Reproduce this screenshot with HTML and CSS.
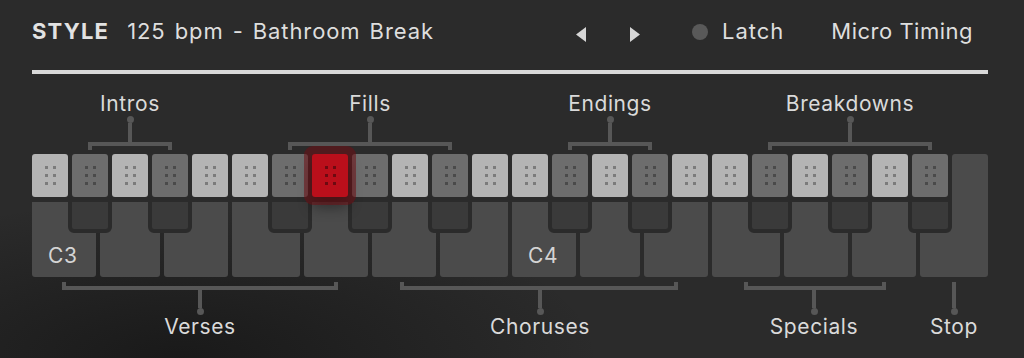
FILE: index.html
```html
<!DOCTYPE html>
<html lang="en">
<head>
    <meta charset="UTF-8">
    <meta name="viewport" content="width=device-width, initial-scale=1.0">
    <title>Style Keyboard</title>
    <link rel="stylesheet" href="styles.css">
</head>
<body>

    <div class="panel">
        <div class="header">
            <span class="title">STYLE</span>
            <span class="style-name">125 bpm - Bathroom Break</span>
            <div class="controls">
                <div class="arrow">
                    <svg width="10" height="15" viewBox="0 0 10 15"><polygon points="10,0 10,15 0,7.5"/></svg>
                </div>
                <div class="arrow next">
                    <svg width="10" height="15" viewBox="0 0 10 15"><polygon points="0,0 0,15 10,7.5"/></svg>
                </div>
                <div class="latch"><span class="latch-dot"></span>Latch</div>
                <div class="micro">Micro Timing</div>
            </div>
        </div>
        <div class="rule"></div>

        <!-- Groups above the keys -->
        <div class="top-groups">
            <div class="group intros">
                <span class="label">Intros</span>
                <span class="dot"></span>
                <span class="stem"></span>
                <span class="bar"></span>
            </div>
            <div class="group fills">
                <span class="label">Fills</span>
                <span class="dot"></span>
                <span class="stem"></span>
                <span class="bar"></span>
            </div>
            <div class="group endings">
                <span class="label">Endings</span>
                <span class="dot"></span>
                <span class="stem"></span>
                <span class="bar"></span>
            </div>
            <div class="group breakdowns">
                <span class="label">Breakdowns</span>
                <span class="dot"></span>
                <span class="stem"></span>
                <span class="bar"></span>
            </div>
        </div>

        <div class="keyboard">
            <div class="white-keys">
                <div class="white-key"><span class="note">C3</span></div>
                <div class="white-key"></div>
                <div class="white-key"></div>
                <div class="white-key"></div>
                <div class="white-key"></div>
                <div class="white-key"></div>
                <div class="white-key"></div>
                <div class="white-key"><span class="note">C4</span></div>
                <div class="white-key"></div>
                <div class="white-key"></div>
                <div class="white-key"></div>
                <div class="white-key"></div>
                <div class="white-key"></div>
                <div class="white-key"></div>
            </div>

            <div class="columns">
                <div class="col"><div class="pad light"></div></div>
                <div class="col"><div class="pad dark"></div><div class="black-key"></div></div>
                <div class="col"><div class="pad light"></div></div>
                <div class="col"><div class="pad dark"></div><div class="black-key"></div></div>
                <div class="col"><div class="pad light"></div></div>
                <div class="col"><div class="pad light"></div></div>
                <div class="col"><div class="pad dark"></div><div class="black-key"></div></div>
                <div class="col"><div class="pad active"></div></div>
                <div class="col"><div class="pad dark"></div><div class="black-key"></div></div>
                <div class="col"><div class="pad light"></div></div>
                <div class="col"><div class="pad dark"></div><div class="black-key"></div></div>
                <div class="col"><div class="pad light"></div></div>
                <div class="col"><div class="pad light"></div></div>
                <div class="col"><div class="pad dark"></div><div class="black-key"></div></div>
                <div class="col"><div class="pad light"></div></div>
                <div class="col"><div class="pad dark"></div><div class="black-key"></div></div>
                <div class="col"><div class="pad light"></div></div>
                <div class="col"><div class="pad light"></div></div>
                <div class="col"><div class="pad dark"></div><div class="black-key"></div></div>
                <div class="col"><div class="pad light"></div></div>
                <div class="col"><div class="pad dark"></div><div class="black-key"></div></div>
                <div class="col"><div class="pad light"></div></div>
                <div class="col"><div class="pad dark"></div><div class="black-key"></div></div>
                <div class="col"><div class="stop-top"></div></div>
            </div>
        </div>

        <!-- Groups below the keys -->
        <div class="bottom-groups">
            <div class="group verses">
                <span class="bar"></span>
                <span class="stem"></span>
                <span class="dot"></span>
                <span class="label">Verses</span>
            </div>
            <div class="group choruses">
                <span class="bar"></span>
                <span class="stem"></span>
                <span class="dot"></span>
                <span class="label">Choruses</span>
            </div>
            <div class="group specials">
                <span class="bar"></span>
                <span class="stem"></span>
                <span class="dot"></span>
                <span class="label">Specials</span>
            </div>
            <div class="group stop">
                <span class="stem"></span>
                <span class="dot"></span>
                <span class="label">Stop</span>
            </div>
        </div>
    </div>

</body>
</html>
```

FILE: styles.css
```css
body {
    margin: 0;
    height: 358px;
    overflow: hidden;
    font-family: Inter, "Open Sans", sans-serif;
    color: #dedede;
    background:
        radial-gradient(ellipse 420px 160px at 180px 358px, rgba(18, 18, 18, 0.7), transparent),
        #2b2b2b;
}

.panel {
    width: 956px;
    padding-left: 32px;
}

.header {
    display: flex;
    align-items: center;
    height: 30px;
    padding-top: 16px;
    line-height: 30px;
}

.title {
    font-weight: 700;
    font-size: 22px;
    letter-spacing: 1.2px;
    color: #e2e2e2;
}

.style-name {
    margin-left: 18px;
    font-size: 22px;
    letter-spacing: 0.9px;
    word-spacing: 2px;
}

.controls {
    margin-left: auto;
    display: flex;
    align-items: center;
    padding-right: 15px;
    font-size: 22px;
    letter-spacing: 0.5px;
}

.arrow {
    display: flex;
    margin-top: 7px;
    fill: #d6d6d6;
}

.arrow.next {
    margin-left: 44px;
}

.latch {
    display: flex;
    align-items: center;
    margin-left: 52px;
    letter-spacing: 1px;
}

.latch-dot {
    width: 16px;
    height: 16px;
    margin: 2px 14px 0 0;
    border-radius: 50%;
    background: #595959;
}

.micro {
    margin-left: 47px;
}

.rule {
    height: 4px;
    margin-top: 24px;
    background: #d9d9d9;
}

/* brackets */

.top-groups {
    display: grid;
    grid-template-columns: repeat(24, 36px);
    column-gap: 4px;
    margin-top: 18px;
}

.bottom-groups {
    display: grid;
    grid-template-columns: 64px 60px 64px 68px 64px 64px 68px 64px 60px 64px 68px 64px 64px 68px;
    column-gap: 4px;
    margin-top: 5px;
}

.group {
    display: flex;
    flex-direction: column;
    align-items: center;
}

.label {
    font-size: 21px;
    line-height: 24px;
    letter-spacing: 0.6px;
    color: #dadada;
    white-space: nowrap;
}

.dot {
    width: 7px;
    height: 7px;
    border-radius: 50%;
    background: #575757;
}

.stem {
    width: 4px;
    height: 19px;
    background: #575757;
}

.bar {
    align-self: stretch;
    height: 8px;
    box-sizing: border-box;
    border: 4px solid #575757;
    border-bottom: 0;
    margin: 0 16px;
}

.bottom-groups .bar {
    border-top: 0;
    border-bottom: 4px solid #575757;
    margin: 0 30px;
}

.bottom-groups .stem {
    height: 18px;
}

.intros { grid-column: 2 / 5; }
.fills { grid-column: 7 / 12; }
.endings { grid-column: 14 / 17; }
.breakdowns { grid-column: 19 / 24; }

.verses { grid-column: 1 / 6; }
.choruses { grid-column: 6 / 11; }
.specials { grid-column: 11 / 14; }
.stop { grid-column: 14 / 15; }

.choruses .bar {
    margin-left: 28px;
}

.specials .bar {
    margin-left: 32px;
}

.bottom-groups .stop .stem {
    height: 26px;
}

/* keys */

.keyboard {
    display: grid;
    height: 123px;
    margin-top: 4px;
}

.white-keys,
.columns {
    grid-area: 1 / 1;
}

.white-keys {
    display: grid;
    grid-template-columns: 64px 60px 64px 68px 64px 64px 68px 64px 60px 64px 68px 64px 64px 68px;
    column-gap: 4px;
    margin-top: 48px;
}

.white-key {
    display: flex;
    align-items: flex-end;
    background: #4b4b4b;
    border-radius: 0 0 3px 3px;
}

.note {
    padding: 0 0 9px 16px;
    font-size: 21px;
    line-height: 24px;
    letter-spacing: 0.6px;
    color: #d4d4d4;
}

.columns {
    display: grid;
    grid-template-columns: repeat(24, 36px);
    column-gap: 4px;
    align-items: start;
}

.col {
    display: flex;
    flex-direction: column;
    align-items: center;
}

.pad {
    display: flex;
    align-items: center;
    justify-content: center;
    width: 36px;
    height: 43px;
    border-radius: 3px;
}

.pad::before {
    content: "";
    width: 3px;
    height: 3px;
    transform: translate(-4px, -8px);
    background: currentColor;
    box-shadow: 8px 0 currentColor, 0 8px currentColor, 8px 8px currentColor,
        0 16px currentColor, 8px 16px currentColor;
}

.pad.light {
    background: #b4b4b4;
    color: #7b7b7b;
}

.pad.dark {
    background: #6d6d6d;
    color: #4a4a4a;
}

.pad.active {
    position: relative;
    z-index: 1;
    background: #ba0f1b;
    color: #6c0a11;
    box-shadow: 0 0 0 8px rgba(112, 14, 20, 0.55), 0 10px 14px rgba(0, 0, 0, 0.4);
}

.black-key {
    flex-shrink: 0;
    width: 44px;
    height: 36px;
    box-sizing: border-box;
    background: #3a3a3a;
    border: 4px solid #2b2b2b;
    border-top-width: 5px;
    border-radius: 0 0 6px 6px;
}

.stop-top {
    width: 36px;
    height: 48px;
    background: #4b4b4b;
    border-radius: 3px 3px 0 0;
}
```
